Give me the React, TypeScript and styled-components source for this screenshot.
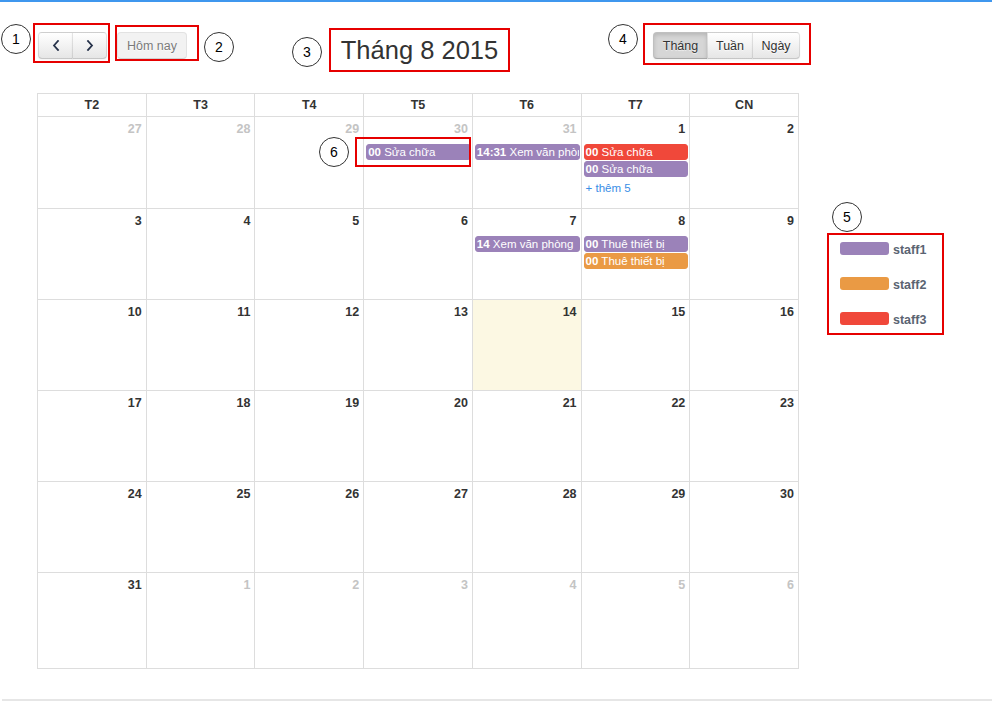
import React from 'react';
import styled, { createGlobalStyle, css } from 'styled-components';

const GlobalStyle = createGlobalStyle`
  html, body { margin: 0; padding: 0; background: #fff; }
  body { font-family: "Liberation Sans", Arial, sans-serif; color: #333; }
  * { box-sizing: border-box; }
`;

const Page = styled.div`
  width: 993px;
  height: 702px;
  display: flex;
  flex-direction: column;
  overflow: hidden;
`;

const TopBar = styled.div`
  height: 2px;
  margin-right: 1px;
  background: #3f97ee;
  flex: none;
`;

const FooterRule = styled.div`
  height: 2px;
  margin: auto 1px 1px 2px;
  background: #e6e6e6;
  flex: none;
`;

const MainRow = styled.div`
  display: flex;
  align-items: flex-start;
`;

const LeftCol = styled.div`
  display: flex;
  flex-direction: column;
  width: 799px;
`;

const Toolbar = styled.div`
  display: flex;
  align-items: flex-start;
  height: 91px;
`;

const Marker = styled.div<{ $ml?: number; $mt?: number }>`
  flex: none;
  width: 30px;
  height: 30px;
  border: 1.6px solid #333;
  border-radius: 50%;
  background: #fff;
  display: flex;
  align-items: center;
  justify-content: center;
  font-size: 14px;
  color: #000;
  margin-left: ${p => p.$ml ?? 0}px;
  margin-top: ${p => p.$mt ?? 0}px;
`;

const Frame = styled.div<{ $ml?: number; $mt?: number; $w: number; $h: number; $pad?: string; $center?: boolean }>`
  flex: none;
  border: 2px solid #e60000;
  width: ${p => p.$w}px;
  height: ${p => p.$h}px;
  margin-left: ${p => p.$ml ?? 0}px;
  margin-top: ${p => p.$mt ?? 0}px;
  padding: ${p => p.$pad ?? '0'};
  display: flex;
  align-items: flex-start;
  ${p => p.$center && css`
    align-items: center;
    justify-content: center;
  `}
`;

const ButtonGroup = styled.div`
  display: flex;
`;

const Button = styled.button<{ $w: number; $active?: boolean; $disabled?: boolean; $first?: boolean; $last?: boolean }>`
  width: ${p => p.$w}px;
  height: 27px;
  padding: 0;
  margin: 0;
  font-family: "Liberation Sans", Arial, sans-serif;
  font-size: 12.5px;
  color: #333;
  text-shadow: 0 1px 1px rgba(255, 255, 255, 0.75);
  background: linear-gradient(to bottom, #ffffff, #e6e6e6);
  border: 1px solid;
  border-color: rgba(0, 0, 0, 0.1) rgba(0, 0, 0, 0.1) rgba(0, 0, 0, 0.22);
  border-radius: ${p => `${p.$first ? 4 : 0}px ${p.$last ? 4 : 0}px ${p.$last ? 4 : 0}px ${p.$first ? 4 : 0}px`};
  box-shadow: inset 0 1px 0 rgba(255, 255, 255, 0.2), 0 1px 2px rgba(0, 0, 0, 0.05);
  display: flex;
  align-items: center;
  justify-content: center;
  & + & { margin-left: -1px; }
  ${p => p.$active && css`
    background: #d6d6d6;
    box-shadow: inset 0 2px 4px rgba(0, 0, 0, 0.15), 0 1px 2px rgba(0, 0, 0, 0.05);
  `}
  ${p => p.$disabled && css`
    opacity: 0.65;
    box-shadow: none;
    background: #ececec;
  `}
`;

const Title = styled.h2`
  margin: 0;
  font-size: 25.5px;
  font-weight: normal;
  color: #333;
  line-height: 30px;
  white-space: nowrap;
`;

const CalendarWrap = styled.div`
  position: relative;
  margin-left: 37px;
  width: 762px;
`;

const Grid = styled.div`
  display: grid;
  grid-template-columns: repeat(7, 1fr);
  border-top: 1px solid #ddd;
  border-left: 1px solid #ddd;
`;

const HeadCell = styled.div`
  height: 23px;
  line-height: 22px;
  border-right: 1px solid #ddd;
  border-bottom: 1px solid #ddd;
  text-align: center;
  font-weight: bold;
  font-size: 12.5px;
  color: #333;
`;

const DayCell = styled.div<{ $h: number; $today?: boolean }>`
  height: ${p => p.$h}px;
  border-right: 1px solid #ddd;
  border-bottom: 1px solid #ddd;
  background: ${p => (p.$today ? '#fcf8e3' : '#fff')};
  min-width: 0;
  display: flex;
  flex-direction: column;
`;

const DayNumber = styled.div<{ $other?: boolean }>`
  height: 20px;
  padding: 5px 4px 0 0;
  line-height: 15px;
  text-align: right;
  font-size: 12.5px;
  font-weight: bold;
  color: ${p => (p.$other ? '#c4c4c4' : '#333')};
`;

const EventList = styled.div`
  margin-top: 7px;
  padding: 0 1px 0 2px;
  display: flex;
  flex-direction: column;
  gap: 1px;
  min-width: 0;
`;

const EventBar = styled.div<{ $color: string }>`
  height: 16px;
  line-height: 14px;
  border: 1px solid ${p => p.$color};
  background: ${p => p.$color};
  border-radius: 3px;
  color: #fff;
  font-size: 11.5px;
  padding-left: 1px;
  white-space: nowrap;
  overflow: hidden;
`;

const EventTime = styled.span`
  font-weight: bold;
`;

const MoreLink = styled.div`
  margin-top: 3px;
  padding-left: 2px;
  line-height: 14px;
  font-size: 11.5px;
  color: #3a8ee6;
`;

const OverlayMarker = styled(Marker)<{ $x: number; $y: number }>`
  position: absolute;
  left: ${p => p.$x}px;
  top: ${p => p.$y}px;
  margin: 0;
`;

const OverlayFrame = styled.div<{ $x: number; $y: number; $w: number; $h: number }>`
  position: absolute;
  left: ${p => p.$x}px;
  top: ${p => p.$y}px;
  width: ${p => p.$w}px;
  height: ${p => p.$h}px;
  border: 2px solid #e60000;
`;

const LegendCol = styled.div`
  margin-left: 28px;
  margin-top: 200px;
  display: flex;
  flex-direction: column;
`;

const LegendBox = styled.div`
  margin-top: 1px;
  width: 117px;
  height: 102px;
  border: 2px solid #e60000;
  padding: 7px 0 0 11px;
  display: flex;
  flex-direction: column;
  gap: 22px;
`;

const LegendItem = styled.div`
  display: flex;
  align-items: center;
  gap: 4px;
  height: 13px;
`;

const Swatch = styled.div<{ $color: string }>`
  width: 49px;
  height: 13px;
  border-radius: 3px;
  background: ${p => p.$color};
`;

const LegendLabel = styled.span`
  font-size: 12.5px;
  font-weight: bold;
  color: #5a6472;
  line-height: 13px;
  padding-top: 3px;
`;

const PURPLE = '#9b82b9';
const ORANGE = '#ea9a44';
const RED = '#f0483a';

type Ev = { time: string; title: string; color: string };
type Day = { n: number; other?: boolean; today?: boolean; events?: Ev[]; more?: string };

const weeks: Day[][] = [
  [
    { n: 27, other: true },
    { n: 28, other: true },
    { n: 29, other: true },
    { n: 30, other: true, events: [{ time: '00', title: 'Sửa chữa', color: PURPLE }] },
    { n: 31, other: true, events: [{ time: '14:31', title: 'Xem văn phòng', color: PURPLE }] },
    {
      n: 1,
      events: [
        { time: '00', title: 'Sửa chữa', color: RED },
        { time: '00', title: 'Sửa chữa', color: PURPLE },
      ],
      more: '+ thêm 5',
    },
    { n: 2 },
  ],
  [
    { n: 3 },
    { n: 4 },
    { n: 5 },
    { n: 6 },
    { n: 7, events: [{ time: '14', title: 'Xem văn phòng', color: PURPLE }] },
    {
      n: 8,
      events: [
        { time: '00', title: 'Thuê thiết bị', color: PURPLE },
        { time: '00', title: 'Thuê thiết bị', color: ORANGE },
      ],
    },
    { n: 9 },
  ],
  [
    { n: 10 }, { n: 11 }, { n: 12 }, { n: 13 }, { n: 14, today: true }, { n: 15 }, { n: 16 },
  ],
  [
    { n: 17 }, { n: 18 }, { n: 19 }, { n: 20 }, { n: 21 }, { n: 22 }, { n: 23 },
  ],
  [
    { n: 24 }, { n: 25 }, { n: 26 }, { n: 27 }, { n: 28 }, { n: 29 }, { n: 30 },
  ],
  [
    { n: 31 },
    { n: 1, other: true },
    { n: 2, other: true },
    { n: 3, other: true },
    { n: 4, other: true },
    { n: 5, other: true },
    { n: 6, other: true },
  ],
];

const rowHeights = [92, 91, 91, 91, 91, 96];
const headers = ['T2', 'T3', 'T4', 'T5', 'T6', 'T7', 'CN'];

const Chevron = ({ dir }: { dir: 'left' | 'right' }) => (
  <svg width="8" height="11" viewBox="0 0 8 11">
    <path
      d={dir === 'left' ? 'M6 1 L2 5.5 L6 10' : 'M2 1 L6 5.5 L2 10'}
      fill="none"
      stroke="#26324a"
      strokeWidth="1.8"
      strokeLinecap="square"
    />
  </svg>
);

export default function App() {
  return (
    <>
      <GlobalStyle />
      <Page>
        <TopBar />
        <MainRow>
          <LeftCol>
            <Toolbar>
              <Marker $ml={1} $mt={22}>1</Marker>
              <Frame $ml={2} $mt={21} $w={77} $h={40} $pad="7px 0 0 3px">
                <ButtonGroup>
                  <Button $w={35} $first>
                    <Chevron dir="left" />
                  </Button>
                  <Button $w={35} $last>
                    <Chevron dir="right" />
                  </Button>
                </ButtonGroup>
              </Frame>
              <Frame $ml={5} $mt={23} $w={84} $h={36} $pad="5px 0 0 0">
                <Button $w={70} $first $last $disabled>Hôm nay</Button>
              </Frame>
              <Marker $ml={5} $mt={30}>2</Marker>
              <Marker $ml={58} $mt={35}>3</Marker>
              <Frame $ml={7} $mt={26} $w={181} $h={44} $center>
                <Title>Tháng 8 2015</Title>
              </Frame>
              <Marker $ml={98} $mt={22}>4</Marker>
              <Frame $ml={5} $mt={21} $w={168} $h={42} $pad="7px 0 0 8px">
                <ButtonGroup>
                  <Button $w={55} $first $active>Tháng</Button>
                  <Button $w={46}>Tuần</Button>
                  <Button $w={48} $last>Ngày</Button>
                </ButtonGroup>
              </Frame>
            </Toolbar>
            <CalendarWrap>
              <Grid>
                {headers.map(h => (
                  <HeadCell key={h}>{h}</HeadCell>
                ))}
                {weeks.map((week, wi) =>
                  week.map((d, di) => (
                    <DayCell key={`${wi}-${di}`} $h={rowHeights[wi]} $today={d.today}>
                      <DayNumber $other={d.other}>{d.n}</DayNumber>
                      {(d.events || d.more) && (
                        <EventList>
                          {d.events?.map((e, i) => (
                            <EventBar key={i} $color={e.color}>
                              <EventTime>{e.time}</EventTime> {e.title}
                            </EventBar>
                          ))}
                          {d.more && <MoreLink>{d.more}</MoreLink>}
                        </EventList>
                      )}
                    </DayCell>
                  ))
                )}
              </Grid>
              <OverlayMarker $x={282} $y={44}>6</OverlayMarker>
              <OverlayFrame $x={318} $y={44} $w={116} $h={30} />
            </CalendarWrap>
          </LeftCol>
          <LegendCol>
            <Marker $ml={5}>5</Marker>
            <LegendBox>
              <LegendItem>
                <Swatch $color={PURPLE} />
                <LegendLabel>staff1</LegendLabel>
              </LegendItem>
              <LegendItem>
                <Swatch $color={ORANGE} />
                <LegendLabel>staff2</LegendLabel>
              </LegendItem>
              <LegendItem>
                <Swatch $color={RED} />
                <LegendLabel>staff3</LegendLabel>
              </LegendItem>
            </LegendBox>
          </LegendCol>
        </MainRow>
        <FooterRule />
      </Page>
    </>
  );
}
